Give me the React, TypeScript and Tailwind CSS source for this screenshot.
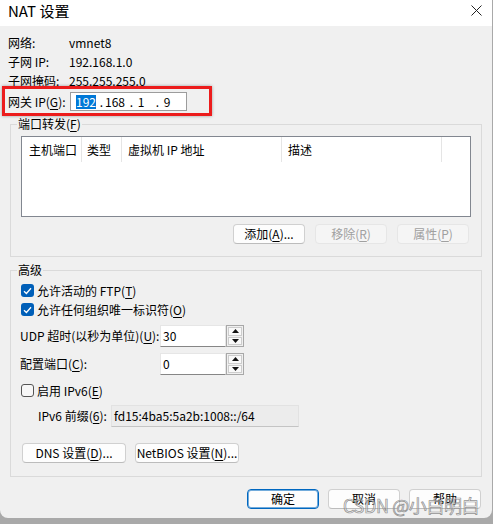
import React from "react";

const U = ({ c }: { c: string }) => (
  <span className="underline underline-offset-[2px] decoration-[1px]">{c}</span>
);

function Btn({
  children,
  w,
  disabled,
  primary,
}: {
  children: React.ReactNode;
  w: string;
  disabled?: boolean;
  primary?: boolean;
}) {
  const base =
    "flex items-center justify-center h-[20px] rounded-[4px] border leading-[16px] ";
  const look = disabled
    ? "bg-[#f5f5f5] border-[#e6e6e6] text-[#a0a0a0]"
    : primary
    ? "bg-[#fdfdfd] border-[#0067c0] shadow-[inset_0_0_0_1px_rgba(0,103,192,0.55)] text-black"
    : "bg-[#fdfdfd] border-[#d0d0d0] border-b-[#bcbcbc] text-black";
  return <div className={base + look + " " + w}>{children}</div>;
}

function Check({ checked }: { checked?: boolean }) {
  if (checked)
    return (
      <div className="w-[13px] h-[13px] rounded-[3px] bg-[#005fb8] flex items-center justify-center shrink-0">
        <svg width="9" height="8" viewBox="0 0 9 8">
          <path d="M1 4.2 L3.4 6.5 L8 1.3" stroke="#fff" strokeWidth="1.3" fill="none" />
        </svg>
      </div>
    );
  return (
    <div className="w-[13px] h-[13px] rounded-[3px] border border-[#555555] bg-[#f7f7f7] shrink-0" />
  );
}

function Spin() {
  return (
    <div className="w-[18px] h-[22px] border border-[#a8a8a8] bg-[#f0f0f0] flex flex-col p-[1px] gap-[1px]">
      <div className="flex-1 bg-[#f9f9f9] border border-[#cdcdcd] flex items-center justify-center">
        <svg width="7" height="4" viewBox="0 0 7 4">
          <path d="M0 4 L3.5 0 L7 4 Z" fill="#111" />
        </svg>
      </div>
      <div className="flex-1 bg-[#f9f9f9] border border-[#cdcdcd] flex items-center justify-center">
        <svg width="7" height="4" viewBox="0 0 7 4">
          <path d="M0 0 L3.5 4 L7 0 Z" fill="#111" />
        </svg>
      </div>
    </div>
  );
}

export default function App() {
  return (
    <div className="relative w-[493px] h-[524px] bg-[#a9a9a9] overflow-hidden font-['Noto_Sans_CJK_SC',sans-serif] text-[12px] text-black">
      <div className="w-[492px] h-[518px] bg-[#f0f0f0] rounded-b-[8px] flex flex-col">
        {/* title bar */}
        <div className="h-[26px] bg-white flex justify-between items-start shrink-0">
          <span className="ml-[8px] text-[15px] leading-[22px]">NAT 设置</span>
          <svg className="mt-[5px] mr-[10px]" width="11" height="11" viewBox="0 0 11 11">
            <path d="M0.5 0.5 L10.5 10.5 M10.5 0.5 L0.5 10.5" stroke="#222" strokeWidth="1" />
          </svg>
        </div>

        {/* info */}
        <div className="pl-[8px] pt-[7px] leading-[16px]">
          <div className="flex items-center h-[19px]">
            <span className="w-[61px]">网络:</span>
            <span>vmnet8</span>
          </div>
          <div className="flex items-center h-[19px]">
            <span className="w-[61px]">子网 IP:</span>
            <span>192.168.1.0</span>
          </div>
          <div className="flex items-center h-[19px]">
            <span className="w-[61px]">子网掩码:</span>
            <span>255.255.255.0</span>
          </div>
          <div className="flex items-center h-[19px] mt-[2px]">
            <span className="w-[62px]">
              网关 IP(<U c="G" />):
            </span>
            <div className="w-[117px] h-[19px] bg-white border border-[#9c9c9c] flex items-center">
              <span className="ml-[5px] w-[20px] h-[14px] bg-[#0078d7] text-white flex items-center justify-center">192</span>
              <span className="ml-[4px] w-[3px] flex justify-center">.</span>
              <span className="ml-[2px] w-[20px] flex justify-center">168</span>
              <span className="ml-[5px] w-[3px] flex justify-center">.</span>
              <span className="ml-[4px] w-[8px] flex justify-center">1</span>
              <span className="ml-[11px] w-[3px] flex justify-center">.</span>
              <span className="ml-[4px] w-[8px] flex justify-center">9</span>
            </div>
          </div>
        </div>

        {/* port forwarding group */}
        <div className="mx-[10px] mt-[13px] border border-[#dadada] flex flex-col pb-[12px]">
          <div className="-mt-[9px] ml-[6px] w-fit px-[1px] h-[16px] leading-[16px] bg-[#f0f0f0]">
            端口转发(<U c="F" />)
          </div>
          <div className="ml-[10px] mt-[4px] w-[450px] h-[81px] bg-white border border-[#828790]">
            <div className="flex h-[25px] leading-[16px]">
              <div className="w-[60px] flex items-center pl-[7px] border-r border-[#e5e5e5]">主机端口</div>
              <div className="w-[40px] flex items-center pl-[5px] border-r border-[#e5e5e5]">类型</div>
              <div className="w-[160px] flex items-center pl-[6px] border-r border-[#e5e5e5]">虚拟机 IP 地址</div>
              <div className="w-[160px] flex items-center pl-[6px] border-r border-[#e5e5e5]">描述</div>
            </div>
          </div>
          <div className="flex justify-end pr-[12px] mt-[7px] gap-[10px]">
            <Btn w="w-[72px]">
              添加(<U c="A" />)...
            </Btn>
            <Btn w="w-[72px]" disabled>
              移除(<U c="R" />)
            </Btn>
            <Btn w="w-[72px]" disabled>
              属性(<U c="P" />)
            </Btn>
          </div>
        </div>

        {/* advanced group */}
        <div className="mx-[10px] mt-[13px] border border-[#dadada] flex flex-col pb-[13px] leading-[16px]">
          <div className="-mt-[9px] ml-[6px] w-fit px-[1px] h-[16px] leading-[16px] bg-[#f0f0f0]">
            高级
          </div>
          <div className="flex items-center h-[19px] mt-[3px] pl-[10px] gap-[3px]">
            <Check checked />
            <span>
              允许活动的 FTP(<U c="T" />)
            </span>
          </div>
          <div className="flex items-center h-[19px] pl-[10px] gap-[3px]">
            <Check checked />
            <span>
              允许任何组织唯一标识符(<U c="O" />)
            </span>
          </div>
          <div className="flex items-center h-[22px] mt-[6px] pl-[9px]">
            <span className="w-[140px]">
              UDP 超时(以秒为单位)(<U c="U" />):
            </span>
            <div className="w-[66px] h-[22px] bg-white border border-[#e6e6e6] border-b-[#868686] pl-[2px] flex items-center">
              30
            </div>
            <Spin />
          </div>
          <div className="flex items-center h-[22px] mt-[6px] pl-[9px]">
            <span className="w-[140px]">
              配置端口(<U c="C" />):
            </span>
            <div className="w-[66px] h-[22px] bg-white border border-[#e6e6e6] border-b-[#868686] pl-[2px] flex items-center">
              0
            </div>
            <Spin />
          </div>
          <div className="flex items-center h-[19px] mt-[6px] pl-[10px] gap-[3px]">
            <Check />
            <span>
              启用 IPv6(<U c="E" />)
            </span>
          </div>
          <div className="flex items-center h-[22px] mt-[5px] pl-[27px]">
            <span className="w-[73px]">
              IPv6 前缀(<U c="6" />):
            </span>
            <div className="w-[188px] h-[22px] bg-[#ececec] border border-[#e2e2e2] border-b-[#c4c4c4] pl-[2px] flex items-center">
              fd15:4ba5:5a2b:1008::/64
            </div>
          </div>
          <div className="flex mt-[16px] pl-[11px] gap-[9px]">
            <Btn w="w-[104px]">
              DNS 设置(<U c="D" />)...
            </Btn>
            <Btn w="w-[104px]">
              NetBIOS 设置(<U c="N" />)...
            </Btn>
          </div>
        </div>

        {/* bottom buttons */}
        <div className="flex justify-end pr-[11px] mt-[12px] gap-[9px]">
          <Btn w="w-[72px]" primary>
            确定
          </Btn>
          <Btn w="w-[72px]">取消</Btn>
          <Btn w="w-[72px]">帮助</Btn>
        </div>
      </div>

      {/* red annotation box */}
      <div className="absolute left-[2px] top-[86px] w-[210px] h-[30px] border-[3px] border-[#ec1c1c] shadow-[0_0_3px_rgba(0,0,0,0.35)]" />

      {/* watermark */}
      <div className="absolute left-[343px] top-[493px] text-[18px] leading-[24px] tracking-[-0.4px] whitespace-nowrap text-[rgba(235,235,235,0.55)] [-webkit-text-stroke:0.7px_rgba(110,110,110,0.75)]">
        CSDN @小白明白
      </div>
    </div>
  );
}
